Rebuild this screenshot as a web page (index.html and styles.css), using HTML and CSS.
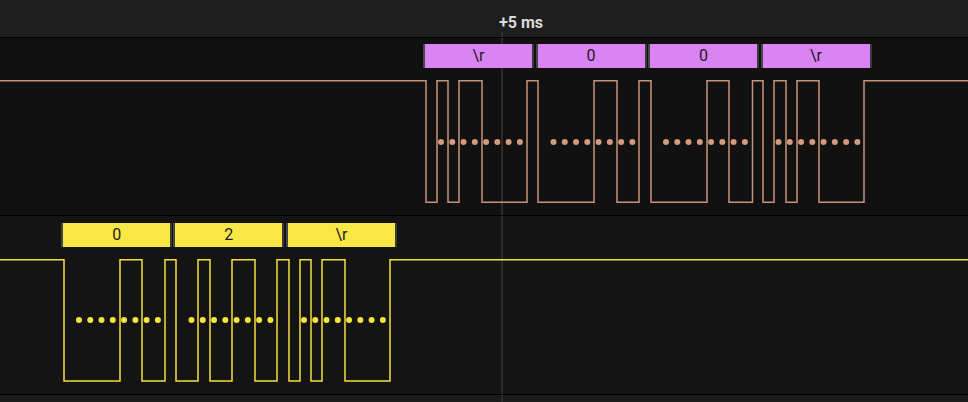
FILE: index.html
```html
<!DOCTYPE html>
<html>
<head>
<meta charset="utf-8">
<link rel="stylesheet" href="styles.css">
</head>
<body>
<div class="app">
  <div class="ruler">
    <span class="ruler-label" style="left:499px">+5 ms</span>
    <span class="ruler-tick" style="left:501px"></span>
  </div>

  <div class="row row-tx">
    <div class="ann-track">
      <div class="ann ann-purple" style="left:423px">\r</div>
      <div class="ann ann-purple" style="left:535.5px">0</div>
      <div class="ann ann-purple" style="left:648px">0</div>
      <div class="ann ann-purple" style="left:760.5px">\r</div>
    </div>
    <svg class="wave" width="968" height="147" viewBox="0 0 968 147">
      <path class="line-orange" d="M0 12.75 H426 V134.25 H437 V12.75 H448 V134.25 H459 V12.75 H482 V134.25 H527 V12.75 H538 V134.25 H594 V12.75 H617 V134.25 H639 V12.75 H651 V134.25 H707 V12.75 H729 V134.25 H752.5 V12.75 H763 V134.25 H774 V12.75 H786 V134.25 H797 V12.75 H819 V134.25 H864 V12.75 H968"/>
      <g class="dots-orange">
        <path d="M441 74 h78.9"/>
        <path d="M553.5 74 h78.9"/>
        <path d="M666 74 h78.9"/>
        <path d="M778.5 74 h78.9"/>
      </g>
    </svg>
  </div>

  <div class="row row-rx">
    <div class="ann-track">
      <div class="ann ann-yellow" style="left:61.3px">0</div>
      <div class="ann ann-yellow" style="left:173.3px">2</div>
      <div class="ann ann-yellow" style="left:286px">\r</div>
    </div>
    <svg class="wave" width="968" height="147" viewBox="0 0 968 147">
      <path class="line-yellow" d="M0 12.75 H64 V134 H120 V12.75 H142 V134 H165 V12.75 H176 V134 H198 V12.75 H210 V134 H232 V12.75 H255 V134 H277 V12.75 H289 V134 H300 V12.75 H311 V134 H322 V12.75 H345 V134 H390 V12.75 H968"/>
      <g class="dots-yellow">
        <path d="M79 73 h78.9"/>
        <path d="M191.5 73 h78.9"/>
        <path d="M304 73 h78.9"/>
      </g>
    </svg>
  </div>

  <div class="row-rest"></div>
</div>
</body>
</html>
```

FILE: styles.css
```css
* {
  box-sizing: border-box;
}

html, body {
  margin: 0;
  padding: 0;
  background: #1a1a1a;
}

body {
  font-family: Roboto, "Liberation Sans", sans-serif;
  width: 968px;
  height: 402px;
  overflow: hidden;
}

.app {
  display: flex;
  flex-direction: column;
  width: 968px;
  height: 402px;
}

.ruler {
  position: relative;
  height: 38px;
  flex: none;
  background: #1e1e1e;
  border-bottom: 1px solid #000;
}

.ruler-label {
  position: absolute;
  top: 15px;
  font-size: 16px;
  line-height: 15px;
  font-weight: 700;
  color: #dadada;
  white-space: nowrap;
}

.ruler-tick {
  position: absolute;
  top: 32px;
  width: 2px;
  height: 5px;
  background: #2e2e2e;
}

.row {
  position: relative;
  flex: none;
  display: flex;
  flex-direction: column;
  border-bottom: 1px solid #000;
}

.row::before,
.row-rest::before {
  content: "";
  position: absolute;
  left: 501px;
  top: 0;
  bottom: 0;
  width: 2px;
  background: #2c2c2c;
}

.row-tx {
  background: #111111;
  padding-top: 6px;
  height: 178px;
}

.row-rx {
  background: #141414;
  padding-top: 7px;
  height: 179px;
}

.row-rest {
  position: relative;
  flex: 1;
  background: #1a1a1a;
}

.ann-track {
  position: relative;
  height: 24px;
  flex: none;
}

.ann {
  position: absolute;
  top: 0;
  width: 111px;
  height: 24px;
  border-left: 2px solid #464646;
  border-right: 2px solid #3a3a3a;
  font-size: 16px;
  line-height: 24px;
  text-align: center;
  color: #1e1a22;
}

.ann-purple {
  background: #d983f5;
}

.ann-yellow {
  background: #f9e746;
}

.wave {
  position: relative;
  display: block;
  flex: none;
}

.wave path {
  fill: none;
}

.line-orange {
  stroke: #c8927a;
  stroke-width: 1.5;
}

.line-yellow {
  stroke: #f4e03c;
  stroke-width: 1.5;
}

.dots-orange path,
.dots-yellow path {
  stroke-width: 6;
  stroke-linecap: round;
  stroke-dasharray: 0 11.27;
}

.dots-orange path {
  stroke: #d39a7d;
}

.dots-yellow path {
  stroke: #f8e53c;
}
```
